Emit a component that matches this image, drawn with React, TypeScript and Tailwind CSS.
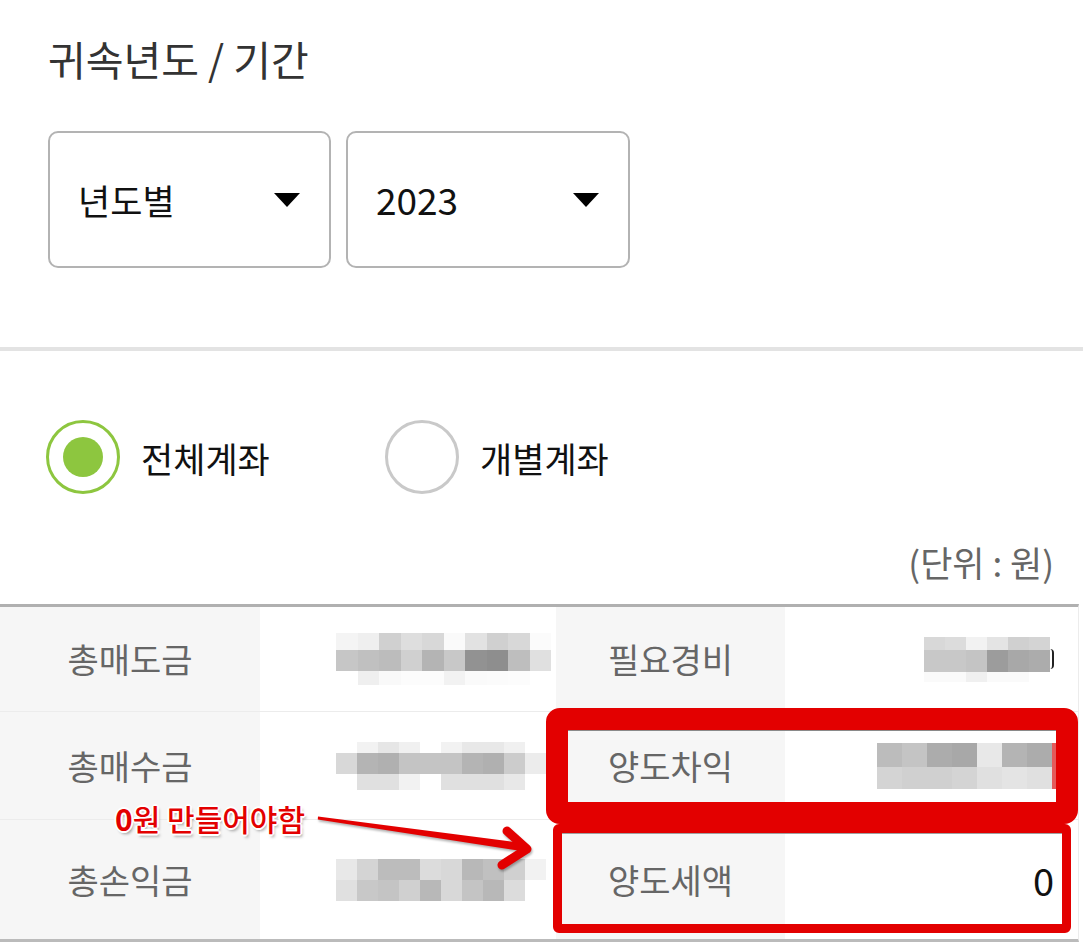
import React from "react";

type MRow = { h: number; c: string[] };

function Mosaic({ rows, w }: { rows: MRow[]; w: number }) {
  return (
    <div className="flex flex-col">
      {rows.map((r, i) => (
        <div key={i} className="flex">
          {r.c.map((c, j) => (
            <div key={j} style={{ width: w, height: r.h, background: c }} />
          ))}
        </div>
      ))}
    </div>
  );
}

const m1: MRow[] = [
  { h: 17, c: ["#f4f4f4", "#efefef", "#d0d0d0", "#dedede", "#d8d8d8", "#fafafa", "#e2e2e2", "#d0d0d0", "#d8d8d8", "#fbfbfb"] },
  { h: 21, c: ["#c6c6c6", "#c0c0c0", "#bcbcbc", "#d0d0d0", "#b4b4b4", "#c8c8c8", "#929292", "#8e8e8e", "#bebebe", "#e0e0e0"] },
  { h: 14, c: ["#ffffff", "#efefef", "#f9f9f9", "#fcfcfc", "#fcfcfc", "#f2f2f2", "#fafafa", "#fbfbfb", "#fcfcfc", "#ffffff"] },
];
const m2: MRow[] = [
  { h: 11, c: ["#ffffff", "#f2f2f2", "#e6e6e6", "#f0f0f0", "#ffffff", "#f2f2f2", "#e8e8e8", "#e8e8e8", "#f0f0f0", "#ffffff"] },
  { h: 21, c: ["#d8d8d8", "#b4b4b4", "#b0b0b0", "#c4c4c4", "#c4c4c4", "#c4c4c4", "#b4b4b4", "#b0b0b0", "#cccccc", "#ececec"] },
  { h: 16, c: ["#ffffff", "#e0e0e0", "#e0e0e0", "#f2f2f2", "#ffffff", "#e0e0e0", "#e0e0e0", "#e0e0e0", "#e8e8e8", "#ffffff"] },
];
const m3: MRow[] = [
  { h: 21, c: ["#e8e8e8", "#d4d4d4", "#bcbcbc", "#bcbcbc", "#dcdcdc", "#d8d8d8", "#b8b8b8", "#c0c0c0", "#d0d0d0", "#f2f2f2"] },
  { h: 21, c: ["#e0e0e0", "#c8c8c8", "#c4c4c4", "#d0d0d0", "#b8b8b8", "#d8d8d8", "#c4c4c4", "#b8b8b8", "#dcdcdc", "#ffffff"] },
];
const m4: MRow[] = [
  { h: 13, c: ["#d8d8d8", "#dcdcdc", "#f2f2f2", "#e4e4e4", "#d0d0d0", "#d4d4d4"] },
  { h: 22, c: ["#c8c8c8", "#c8c8c8", "#c4c4c4", "#9c9c9c", "#a8a8a8", "#acacac"] },
  { h: 10, c: ["#fafafa", "#fafafa", "#f0f0f0", "#fafafa", "#fafafa", "#ffffff"] },
];
const m5: MRow[] = [
  { h: 24, c: ["#bcbcbc", "#c4c4c4", "#acacac", "#a8a8a8", "#e8e8e8", "#b4b4b4", "#acacac"] },
  { h: 22, c: ["#d4d4d4", "#d0d0d0", "#d0d0d0", "#d4d4d4", "#e0e0e0", "#e4e4e4", "#e0e0e0"] },
];

function Caret() {
  return (
    <svg width="26" height="14" viewBox="0 0 26 14">
      <polygon points="0,0 26,0 13,14" fill="#000" />
    </svg>
  );
}

function Dropdown({ label, w, size }: { label: string; w: string; size: string }) {
  return (
    <div className={`${w} h-[137px] border-2 border-[#b3b3b3] rounded-[10px] flex items-center justify-between pl-[28px] pr-[29px]`}>
      <span className={`${size} leading-none text-[#111]`}>{label}</span>
      <Caret />
    </div>
  );
}

function Label({ children }: { children: React.ReactNode }) {
  return (
    <div className="bg-[#f6f6f6] flex items-center justify-center text-[34px] leading-none text-[#666]">
      {children}
    </div>
  );
}

export default function App() {
  return (
    <div className="relative w-[1083px] h-[944px] overflow-hidden bg-white font-['Noto_Sans_CJK_KR','Noto_Sans',sans-serif]">
      <div className="pl-[48px] pt-[38px]">
        <h1 className="text-[41px] leading-none text-[#333] font-normal">귀속년도 / 기간</h1>
        <div className="mt-[52px] flex gap-[15px]">
          <Dropdown label="년도별" w="w-[283px]" size="text-[35px]" />
          <Dropdown label="2023" w="w-[284px]" size="text-[37px]" />
        </div>
      </div>

      <div className="mt-[79px] h-[4px] bg-[#e3e3e3]" />

      <div className="mt-[69px] pl-[46px] flex items-center">
        <div className="w-[339px] flex items-center gap-[21px]">
          <div className="w-[74px] h-[74px] rounded-full border-[3px] border-[#8dc63f] flex items-center justify-center">
            <div className="w-[40px] h-[40px] rounded-full bg-[#8dc63f]" />
          </div>
          <span className="text-[35px] leading-none text-[#111]">전체계좌</span>
        </div>
        <div className="flex items-center gap-[21px]">
          <div className="w-[74px] h-[74px] rounded-full border-[3px] border-[#c9c9c9]" />
          <span className="text-[35px] leading-none text-[#111]">개별계좌</span>
        </div>
      </div>

      <div className="mt-[50px] pr-[29px] text-right text-[35px] leading-none text-[#666]">(단위 : 원)</div>

      <div className="mt-[25px] w-[1079px] border-t-[3px] border-t-[#b0b0b0] border-b-[3px] border-b-[#bbbbbb] border-r border-r-[#ececec]">
        <div className="grid grid-cols-[260px_296px_229px_293px] h-[105px] border-b border-[#ececec]">
          <Label>총매도금</Label>
          <div className="flex items-center pl-[76px]">
            <Mosaic rows={m1} w={21.5} />
          </div>
          <Label>필요경비</Label>
          <div className="flex items-center pl-[139px]">
            <Mosaic rows={m4} w={21} />
            <div className="w-[4px] h-[20px] border-r-2 border-[#222] rounded-r-full" />
          </div>
        </div>
        <div className="grid grid-cols-[260px_296px_229px_293px] h-[108px] border-b border-[#ececec]">
          <Label>총매수금</Label>
          <div className="flex items-center pl-[76px]">
            <Mosaic rows={m2} w={21} />
          </div>
          <Label>양도차익</Label>
          <div className="flex items-center pl-[92px]">
            <Mosaic rows={m5} w={25} />
            <div className="w-[4px] h-[46px] bg-[#e45a5a]" />
          </div>
        </div>
        <div className="grid grid-cols-[260px_296px_229px_293px] h-[119px]">
          <Label>총손익금</Label>
          <div className="flex items-center pl-[76px]">
            <Mosaic rows={m3} w={21} />
          </div>
          <Label>양도세액</Label>
          <div className="flex items-center justify-end pr-[24px] text-[38px] leading-none text-[#111]">0</div>
        </div>
      </div>

      {/* annotation boxes */}
      <div className="pointer-events-none absolute left-[553px] top-[824px] w-[518px] h-[109px] border-[9px] border-[#e30000] rounded-[6px]">
        <div className="h-px bg-[#a0a0a0]" />
      </div>
      <div className="pointer-events-none absolute left-[546px] top-[708px] w-[532px] h-[116px] border-[22px] border-[#e30000] rounded-[14px]">
        <div className="h-px bg-[#8a8a8a]" />
      </div>

      <svg
        className="pointer-events-none absolute left-0 top-0 drop-shadow-[1px_2px_1px_rgba(0,0,0,0.3)]"
        width="1083"
        height="944"
        viewBox="0 0 1083 944"
      >
        <polygon points="318,816.5 522.6,843 521.4,851 317.8,819.5" fill="#e30000" />
        <polyline
          points="507,831 527,849 502,865"
          fill="none"
          stroke="#e30000"
          strokeWidth="9"
          strokeLinecap="round"
          strokeLinejoin="round"
        />
      </svg>

      <div className="absolute left-[115px] top-[803px] text-[30px] leading-none text-[#e30000] whitespace-nowrap [text-shadow:-2px_0_#fff,2px_0_#fff,0_-2px_#fff,0_2px_#fff,-1px_-1px_#fff,1px_1px_#fff,-1px_1px_#fff,1px_-1px_#fff,2px_3px_3px_rgba(0,0,0,0.35)]">
        <span className="font-bold">0</span>
        <span className="font-medium">원 만들어야함</span>
      </div>
    </div>
  );
}
